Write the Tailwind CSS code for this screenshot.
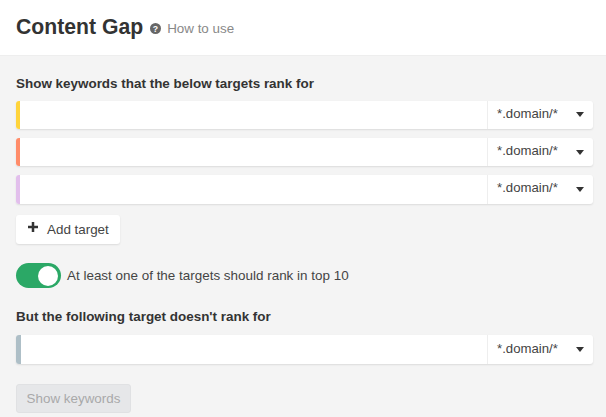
<!DOCTYPE html>
<html lang="en">
<head>
  <meta charset="UTF-8" />
  <title>Content Gap</title>
  <script src="https://cdn.jsdelivr.net/npm/@tailwindcss/browser@4"></script>
</head>
<body class="h-[417px] w-[606px] overflow-hidden bg-[#f4f4f4] font-['Liberation_Sans',Arial,sans-serif] text-[#333]">
  <!-- Header -->
  <header class="h-[56px] bg-white border-b border-[#eeeeee] pl-4 flex items-center">
    <h1 class="text-[21.2px] font-bold leading-none relative top-[-1px]">Content Gap</h1>
    <svg class="ml-[7px] w-[11px] h-[11px] mt-[1px]" viewBox="0 0 12 12"><circle cx="6" cy="6" r="6" fill="#666"/><text x="6" y="9.5" text-anchor="middle" font-size="9.5" font-weight="700" fill="#fff" font-family="Liberation Sans">?</text></svg>
    <span class="ml-[6px] text-[13.4px] text-[#888] mt-[3px]">How to use</span>
  </header>

  <main class="px-4 pt-[20px]">
    <h2 class="text-[13.45px] font-bold leading-[16px]">Show keywords that the below targets rank for</h2>

    <div class="mt-[8.5px] flex flex-col gap-[8.75px]">
      <div class="flex h-[28.5px] bg-white rounded-[3px] shadow-[0_1px_2px_rgba(0,0,0,0.1)] overflow-hidden w-[577px]">
        <div class="w-1 bg-[#ffd43b]"></div>
        <input class="flex-1 min-w-0 outline-none" />
        <div class="w-[106px] border-l border-[#eee] flex items-center pl-[9px] pr-[9px] justify-between text-[13.2px] text-[#444]">
          <span class="relative top-[-1px]">*.domain/*</span>
          <svg class="w-[8px] h-[5px]" viewBox="0 0 8 5"><path d="M0 0h8L4 5z" fill="#333"/></svg>
        </div>
      </div>
      <div class="flex h-[28.5px] bg-white rounded-[3px] shadow-[0_1px_2px_rgba(0,0,0,0.1)] overflow-hidden w-[577px]">
        <div class="w-1 bg-[#ff8c69]"></div>
        <input class="flex-1 min-w-0 outline-none" />
        <div class="w-[106px] border-l border-[#eee] flex items-center pl-[9px] pr-[9px] justify-between text-[13.2px] text-[#444]">
          <span class="relative top-[-1px]">*.domain/*</span>
          <svg class="w-[8px] h-[5px]" viewBox="0 0 8 5"><path d="M0 0h8L4 5z" fill="#333"/></svg>
        </div>
      </div>
      <div class="flex h-[28.5px] bg-white rounded-[3px] shadow-[0_1px_2px_rgba(0,0,0,0.1)] overflow-hidden w-[577px]">
        <div class="w-1 bg-[#e2bfec]"></div>
        <input class="flex-1 min-w-0 outline-none" />
        <div class="w-[106px] border-l border-[#eee] flex items-center pl-[9px] pr-[9px] justify-between text-[13.2px] text-[#444]">
          <span class="relative top-[-1px]">*.domain/*</span>
          <svg class="w-[8px] h-[5px]" viewBox="0 0 8 5"><path d="M0 0h8L4 5z" fill="#333"/></svg>
        </div>
      </div>
    </div>

    <button class="mt-[11.5px] h-[28.5px] w-[104px] bg-white rounded-[3px] shadow-[0_1px_2px_rgba(0,0,0,0.1)] flex items-center pl-[12px] text-[13.4px] text-[#444]">
      <svg class="w-[10px] h-[10px] relative top-[-2px]" viewBox="0 0 10 10"><path d="M3.75 0h2.5v3.75H10v2.5H6.25V10h-2.5V6.25H0v-2.5h3.75z" fill="#333"/></svg>
      <span class="ml-[9px] relative top-[1px]">Add target</span>
    </button>

    <div class="mt-[19.5px] flex items-center h-[25px]">
      <div class="w-[45px] h-[25px] rounded-full bg-[#2ba866] flex items-center justify-end pr-[3px]">
        <div class="w-[20px] h-[20px] rounded-full bg-white"></div>
      </div>
      <span class="ml-[6px] text-[13.45px] text-[#444] relative top-[1px]">At least one of the targets should rank in top 10</span>
    </div>

    <h2 class="mt-[21px] text-[13.45px] font-bold leading-[16px]">But the following target doesn't rank for</h2>

    <div class="mt-[10px] flex h-[29px] bg-white rounded-[3px] shadow-[0_1px_2px_rgba(0,0,0,0.1)] overflow-hidden w-[577px]">
      <div class="w-[5px] bg-[#aebfc7]"></div>
      <input class="flex-1 min-w-0 outline-none" />
      <div class="w-[106px] border-l border-[#eee] flex items-center pl-[9px] pr-[9px] justify-between text-[13.2px] text-[#444]">
        <span class="relative top-[-1px]">*.domain/*</span>
        <svg class="w-[8px] h-[5px]" viewBox="0 0 8 5"><path d="M0 0h8L4 5z" fill="#333"/></svg>
      </div>
    </div>

    <button class="mt-[20px] h-[29px] w-[115px] bg-[#e6e7e9] rounded-[3px] border border-[#e0e1e3] text-[13.4px] text-[#a9a9a9] pt-[1px]">Show keywords</button>
  </main>
</body>
</html>
